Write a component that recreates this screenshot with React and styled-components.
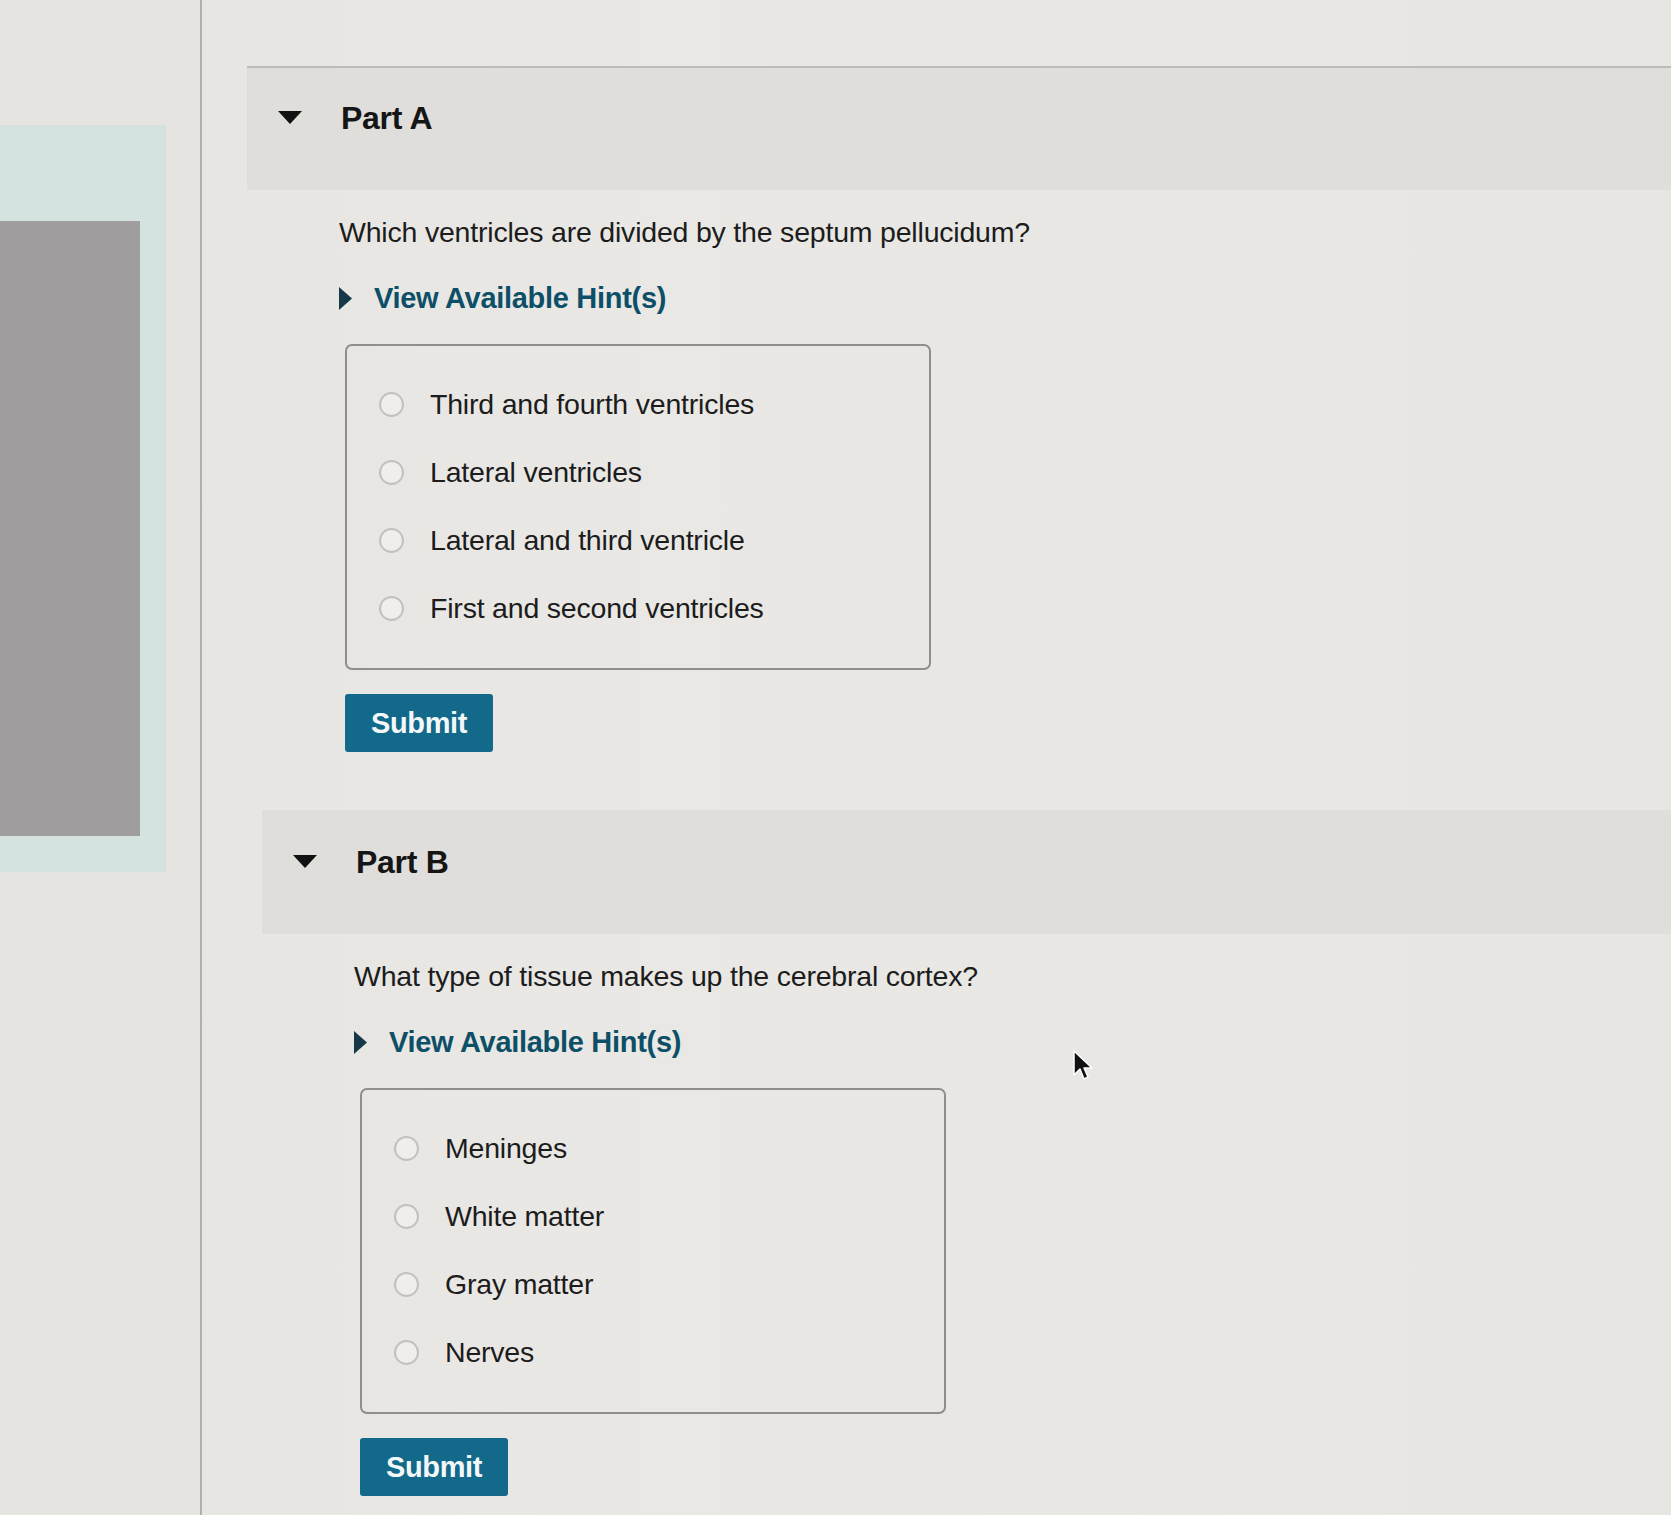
import React from "react";
import styled, { createGlobalStyle } from "styled-components";

const Global = createGlobalStyle`
  html, body {
    margin: 0;
    padding: 0;
    background: #e8e7e4;
  }
  body {
    font-family: "Liberation Sans", Arial, Helvetica, sans-serif;
    color: #1b1b1b;
  }
`;

const Page = styled.div`
  display: flex;
  min-height: 1515px;
  position: relative;
  overflow: hidden;
  background: linear-gradient(90deg, #e6e5e2 0%, #e9e8e5 40%, #e7e6e3 100%);
`;

const Sidebar = styled.aside`
  width: 200px;
  flex: none;
  border-right: 2px solid #b0afad;
  background: #e5e4e1;
  display: flex;
  flex-direction: column;
`;

const TealPanel = styled.div`
  margin-top: 125px;
  width: 166px;
  height: 747px;
  background: #d5e3e0;
  padding-top: 96px;
  box-sizing: border-box;
`;

const GrayBox = styled.div`
  width: 140px;
  height: 615px;
  background: #a09d9e;
`;

const Main = styled.main`
  flex: 1;
  padding-top: 66px;
  display: flex;
  flex-direction: column;
  gap: 58px;
`;

const Section = styled.section`
  margin-left: ${(p) => p.$shift}px;
  display: flex;
  flex-direction: column;
`;

const Header = styled.div`
  height: 124px;
  box-sizing: border-box;
  border-top: ${(p) => (p.$line ? "2px solid #bcbbb8" : "2px solid transparent")};
  background: #dfdedb;
  display: flex;
  align-items: flex-start;
  padding: 31px 0 0 31px;
`;

const Caret = styled.svg`
  margin-top: 12px;
  flex: none;
`;

const Title = styled.h2`
  margin: 0 0 0 39px;
  font-size: 32px;
  line-height: 38px;
  font-weight: 700;
  color: #151515;
  letter-spacing: -0.3px;
`;

const Body = styled.div`
  padding-left: 92px;
  display: flex;
  flex-direction: column;
  align-items: flex-start;
`;

const Question = styled.p`
  margin: 26px 0 0;
  font-size: 28.5px;
  line-height: 32px;
  color: #1c1c1c;
  letter-spacing: -0.2px;
`;

const HintRow = styled.div`
  margin-top: 34px;
  display: flex;
  align-items: center;
  gap: 22px;
  height: 32px;
`;

const HintLink = styled.span`
  font-size: 29px;
  font-weight: 700;
  color: #0d4f67;
  letter-spacing: -0.3px;
`;

const OptionsBox = styled.div`
  margin: 30px 0 0 6px;
  width: 586px;
  box-sizing: border-box;
  border: 2px solid #8e8e8c;
  border-radius: 7px;
  padding: 24px 0 26px 32px;
  display: flex;
  flex-direction: column;
`;

const Option = styled.label`
  height: 68px;
  display: flex;
  align-items: center;
  gap: 26px;
  font-size: 28.5px;
  color: #1c1c1c;
  letter-spacing: -0.2px;
`;

const Radio = styled.span`
  width: 25px;
  height: 25px;
  flex: none;
  border-radius: 50%;
  border: 2px solid #c2c1bf;
  box-sizing: border-box;
  background: #efeeeb;
`;

const SubmitButton = styled.button`
  margin: 24px 0 0 6px;
  width: 148px;
  height: 58px;
  border: none;
  border-radius: 3px;
  background: #12698a;
  color: #f4f7f8;
  font-family: "Liberation Sans", Arial, sans-serif;
  font-size: 29px;
  font-weight: 700;
  letter-spacing: -0.4px;
`;

const Cursor = styled.svg`
  position: absolute;
  left: 1072px;
  top: 1049px;
`;

const DownTriangle = () => (
  <Caret width="24" height="13" viewBox="0 0 24 13">
    <polygon points="0,0 24,0 12,13" fill="#111" />
  </Caret>
);

const RightTriangle = () => (
  <svg width="13" height="23" viewBox="0 0 13 23">
    <polygon points="0,0 13,11.5 0,23" fill="#16394a" />
  </svg>
);

const parts = [
  {
    title: "Part A",
    shift: 45,
    line: true,
    question: "Which ventricles are divided by the septum pellucidum?",
    options: [
      "Third and fourth ventricles",
      "Lateral ventricles",
      "Lateral and third ventricle",
      "First and second ventricles",
    ],
  },
  {
    title: "Part B",
    shift: 60,
    line: false,
    question: "What type of tissue makes up the cerebral cortex?",
    options: ["Meninges", "White matter", "Gray matter", "Nerves"],
  },
];

export default function App() {
  return (
    <>
      <Global />
      <Page>
        <Sidebar>
          <TealPanel>
            <GrayBox />
          </TealPanel>
        </Sidebar>
        <Main>
          {parts.map((p) => (
            <Section key={p.title} $shift={p.shift}>
              <Header $line={p.line}>
                <DownTriangle />
                <Title>{p.title}</Title>
              </Header>
              <Body>
                <Question>{p.question}</Question>
                <HintRow>
                  <RightTriangle />
                  <HintLink>View Available Hint(s)</HintLink>
                </HintRow>
                <OptionsBox>
                  {p.options.map((o) => (
                    <Option key={o}>
                      <Radio />
                      {o}
                    </Option>
                  ))}
                </OptionsBox>
                <SubmitButton>Submit</SubmitButton>
              </Body>
            </Section>
          ))}
        </Main>
        <Cursor width="22" height="32" viewBox="0 0 22 32">
          <path
            d="M2 2 L2 26 L8 20 L12 30 L16 28 L12 19 L20 19 Z"
            fill="#111"
            stroke="#fff"
            strokeWidth="1.5"
            strokeLinejoin="round"
          />
        </Cursor>
      </Page>
    </>
  );
}
